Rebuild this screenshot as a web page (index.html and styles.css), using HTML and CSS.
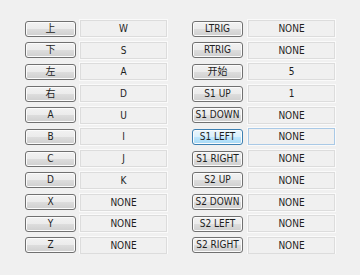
FILE: index.html
```html
<!DOCTYPE html>
<html lang="en">
<head>
    <meta charset="UTF-8">
    <meta name="viewport" content="width=device-width, initial-scale=1.0">
    <title>Key Config</title>
    <link rel="stylesheet" href="styles.css">
</head>
<body>

<div class="panel">
    <div class="col">
        <button class="key-button">上</button><div class="key-field">W</div>
        <button class="key-button">下</button><div class="key-field">S</div>
        <button class="key-button">左</button><div class="key-field">A</div>
        <button class="key-button">右</button><div class="key-field">D</div>
        <button class="key-button">A</button><div class="key-field">U</div>
        <button class="key-button">B</button><div class="key-field">I</div>
        <button class="key-button">C</button><div class="key-field">J</div>
        <button class="key-button">D</button><div class="key-field">K</div>
        <button class="key-button">X</button><div class="key-field">NONE</div>
        <button class="key-button">Y</button><div class="key-field">NONE</div>
        <button class="key-button">Z</button><div class="key-field">NONE</div>
    </div>
    <div class="col col-right">
        <button class="key-button">LTRIG</button><div class="key-field">NONE</div>
        <button class="key-button">RTRIG</button><div class="key-field">NONE</div>
        <button class="key-button">开始</button><div class="key-field">5</div>
        <button class="key-button">S1 UP</button><div class="key-field">1</div>
        <button class="key-button">S1 DOWN</button><div class="key-field">NONE</div>
        <button class="key-button active">S1 LEFT</button><div class="key-field active">NONE</div>
        <button class="key-button">S1 RIGHT</button><div class="key-field">NONE</div>
        <button class="key-button">S2 UP</button><div class="key-field">NONE</div>
        <button class="key-button">S2 DOWN</button><div class="key-field">NONE</div>
        <button class="key-button">S2 LEFT</button><div class="key-field">NONE</div>
        <button class="key-button">S2 RIGHT</button><div class="key-field">NONE</div>
    </div>
</div>

</body>
</html>
```

FILE: styles.css
```css
body {
    margin: 0;
    padding: 20px 0 0 25px;
    background-color: #f0f0f0;
    font-family: 'DejaVu Sans Condensed', 'DejaVu Sans', 'Noto Sans CJK SC', sans-serif;
    font-size: 10px;
    color: #1e1e1e;
}

.panel {
    display: flex;
    gap: 25px;
}

.col {
    display: grid;
    grid-template-columns: 51px 87px;
    grid-auto-rows: 17px;
    column-gap: 4px;
    row-gap: 4.7px;
    align-items: center;
}

.col-right {
    column-gap: 5px;
}

.key-button {
    height: 16px;
    margin: 0;
    padding: 0;
    font: inherit;
    color: inherit;
    line-height: 14px;
    border: 1px solid #707070;
    border-radius: 3px;
    background: linear-gradient(#f2f2f2 0%, #ebebeb 50%, #dddddd 51%, #cfcfcf 100%);
    box-shadow: inset 0 0 0 1px #fbfbfb;
    cursor: pointer;
}

.key-button.active {
    border-color: #3c7fb1;
    background: linear-gradient(#eaf6fd 0%, #d9f0fc 50%, #bee6fd 51%, #a7d9f5 100%);
}

.key-field {
    height: 17px;
    box-sizing: border-box;
    line-height: 15px;
    text-align: center;
    border: 1px solid #dcdcdc;
    box-shadow: 0 0 0 1px #fafafa;
    background-color: #f0f0f0;
}

.key-field.active {
    border-color: #a9c9e6;
}
```
